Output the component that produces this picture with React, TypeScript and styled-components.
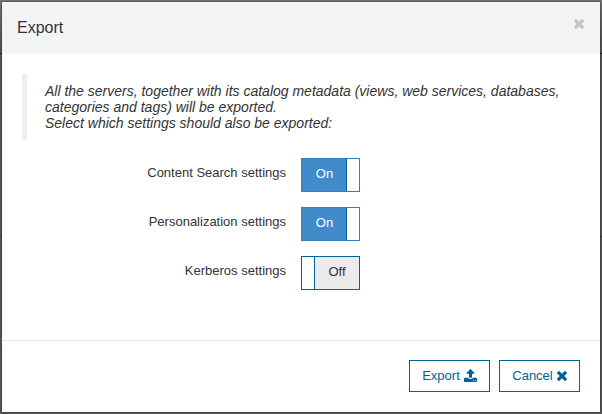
import React, { useState } from 'react';
import styled, { createGlobalStyle } from 'styled-components';

const GlobalStyle = createGlobalStyle`
  *, *::before, *::after { box-sizing: border-box; }
  body {
    margin: 0;
    color: #333;
    font: 13px/18px "Liberation Sans", Arial, sans-serif;
  }
  button { font: inherit; margin: 0; cursor: pointer; }
`;

const Backdrop = styled.div`
  height: 414px;
  padding: 2px;
  overflow: hidden;
  background:
    linear-gradient(#00274a, #00274a) 0 53px / 100% 1px no-repeat,
    linear-gradient(#3c3d3e, #3c3d3e) 0 236px / 100% 1px no-repeat,
    linear-gradient(#767676, #585858 10%, #58595a);
`;

const Dialog = styled.section`
  display: flex;
  flex-direction: column;
  height: 410px;
  width: 598px;
  background: #fff;
  box-shadow: 0 0 2px rgba(0, 0, 0, 0.7);
`;

const Header = styled.header`
  display: flex;
  justify-content: space-between;
  align-items: flex-start;
  height: 52px;
  padding: 15px 16px 0 15px;
  background: #f3f4f6;
`;

const Title = styled.h1`
  margin: 0;
  font-size: 16px;
  font-weight: 400;
  line-height: 21px;
`;

const CloseButton = styled.button`
  display: flex;
  padding: 2px 0 0;
  border: 0;
  background: none;
  color: #c3c4c5;
`;

const Body = styled.div`
  flex: 1;
  padding: 20px;
`;

const Note = styled.blockquote`
  margin: 0 0 18px;
  height: 66px;
  padding: 9px 0 0 18px;
  border-left: 5px solid #eee;
  font-size: 14px;
  font-style: italic;
  line-height: 16px;
  white-space: nowrap;
`;

const Settings = styled.div`
  display: grid;
  grid-template-columns: 264px 59px;
  column-gap: 15px;
  row-gap: 15px;
`;

const Label = styled.span`
  padding-top: 6px;
  text-align: right;
  white-space: nowrap;
`;

const Switch = styled.button<{ $on: boolean }>`
  display: flex;
  flex-direction: ${p => (p.$on ? 'row' : 'row-reverse')};
  width: 59px;
  height: 34px;
  padding: 0;
  border: 1px solid ${p => (p.$on ? '#357ebd' : '#006298')};
  background: #fff;
`;

const SwitchState = styled.span<{ $on: boolean }>`
  width: 45px;
  height: 32px;
  padding: 6px 0 0 ${p => (p.$on ? '1px' : '0')};
  border-style: solid;
  border-color: #006298;
  border-width: ${p => (p.$on ? '0 1px 0 0' : '0 0 0 1px')};
  background: ${p => (p.$on ? '#428bca' : '#ebebeb')};
  color: ${p => (p.$on ? '#fff' : '#333')};
`;

const Footer = styled.footer`
  display: flex;
  justify-content: flex-end;
  gap: 9px;
  height: 72px;
  padding: 19px 20px 0;
  border-top: 1px solid #e5e5e5;
`;

const ActionButton = styled.button`
  display: flex;
  align-items: center;
  justify-content: center;
  gap: 4px;
  width: 81px;
  height: 32px;
  padding: 0;
  border: 1px solid #006298;
  background: #fff;
  color: #006298;
`;

const Glyph = styled.svg`
  display: block;
  fill: currentColor;
`;

const UploadGlyph = styled(Glyph)`
  margin-bottom: 2px;
`;

const TIMES =
  'M1490 1322q0 40-28 68l-136 136q-28 28-68 28t-68-28l-294-294-294 294q-28 28-68 28t-68-28l-136-136q-28-28-28-68t28-68l294-294-294-294q-28-28-28-68t28-68l136-136q28-28 68-28t68 28l294 294 294-294q28-28 68-28t68 28l136 136q28 28 28 68t-28 68l-294 294 294 294q28 28 28 68z';
const UPLOAD =
  'M1344 1472q0-26-19-45t-45-19-45 19-19 45 19 45 45 19 45-19 19-45zm256 0q0-26-19-45t-45-19-45 19-19 45 19 45 45 19 45-19 19-45zm128-224v320q0 40-28 68t-68 28h-1472q-40 0-68-28t-28-68v-320q0-40 28-68t68-28h427q21 56 70.5 92t110.5 36h256q61 0 110.5-36t70.5-92h427q40 0 68 28t28 68zm-325-648q-17 40-59 40h-256v448q0 26-19 45t-45 19h-256q-26 0-45-19t-19-45v-448h-256q-42 0-59-40-17-39 14-69l448-448q18-19 45-19t45 19l448 448q31 30 14 69z';

const TimesIcon = ({ width, height }: { width: number; height: number }) => (
  <Glyph width={width} height={height} viewBox="302 366 1188 1188" preserveAspectRatio="none" aria-hidden>
    <path d={TIMES} />
  </Glyph>
);

const UploadIcon = () => (
  <UploadGlyph width={13} height={13} viewBox="64 64 1664 1600" preserveAspectRatio="none" aria-hidden>
    <path d={UPLOAD} />
  </UploadGlyph>
);

function Setting({ label, initial }: { label: string; initial: boolean }) {
  const [on, setOn] = useState(initial);
  return (
    <>
      <Label>{label}</Label>
      <Switch type="button" role="switch" aria-checked={on} aria-label={label} $on={on} onClick={() => setOn(!on)}>
        <SwitchState $on={on}>{on ? 'On' : 'Off'}</SwitchState>
      </Switch>
    </>
  );
}

export default function App() {
  return (
    <Backdrop>
      <GlobalStyle />
      <Dialog role="dialog" aria-label="Export">
        <Header>
          <Title>Export</Title>
          <CloseButton type="button" aria-label="Close">
            <TimesIcon width={10} height={10} />
          </CloseButton>
        </Header>
        <Body>
          <Note>
            All the servers, together with its catalog metadata (views, web services, databases,
            <br />
            categories and tags) will be exported.
            <br />
            Select which settings should also be exported:
          </Note>
          <Settings>
            <Setting label="Content Search settings" initial />
            <Setting label="Personalization settings" initial />
            <Setting label="Kerberos settings" initial={false} />
          </Settings>
        </Body>
        <Footer>
          <ActionButton type="button">
            Export
            <UploadIcon />
          </ActionButton>
          <ActionButton type="button">
            Cancel
            <TimesIcon width={10} height={10} />
          </ActionButton>
        </Footer>
      </Dialog>
    </Backdrop>
  );
}
